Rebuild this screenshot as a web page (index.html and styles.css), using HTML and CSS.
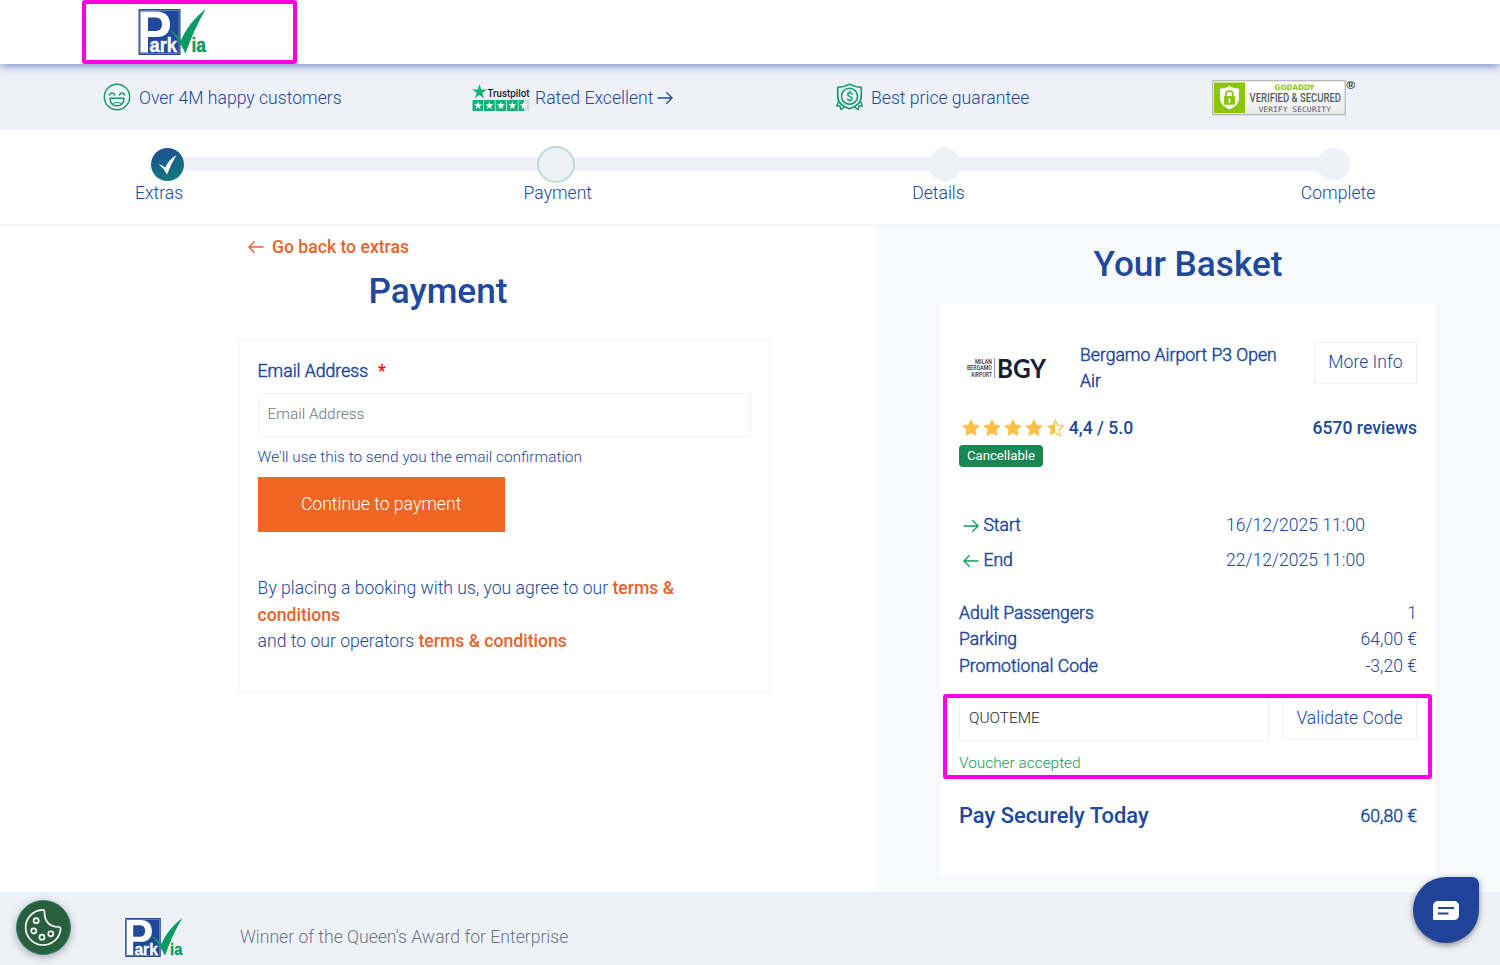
FILE: index.html
```html
<!DOCTYPE html>
<html lang="en">
<head>
<meta charset="utf-8">
<title>ParkVia - Payment</title>
<link rel="stylesheet" href="styles.css">
</head>
<body>
<svg class="defs" width="0" height="0">
  <symbol id="logo" viewBox="0 0 68 46">
    <rect x="0" y="0" width="42" height="46" fill="#20489b"/>
    <rect x="1.500" y="1.500" width="39" height="43" fill="none" stroke="#c9d3ea" stroke-width=".4"/>
    <path fill="#fff" fill-rule="evenodd" d="M2 2.500H18C27 2.500 31.500 7.500 31.500 15.500S27 28 18 28H9.500V43.500H2ZM9.500 8.500V22H17.500Q23.500 22 23.500 15.300T17.500 8.500Z"/>
    <text x="11" y="43.300" class="logo-text" fill="#fff" stroke="#fff" textLength="27.500" lengthAdjust="spacingAndGlyphs">ark</text>
    <path fill="#0a9b63" d="M30.500 20.500C35 23 39 26 42.500 31C49 17 57 8 67.500 0C59 14 53 28 47 44.500Q40 30 30.500 20.500Z"/>
    <text x="53" y="43.300" class="logo-text" fill="#0a9b63" stroke="#0a9b63" textLength="14.500" lengthAdjust="spacingAndGlyphs">ia</text>
  </symbol>
  <symbol id="right" viewBox="0 0 16 14">
    <path d="M.5 7H15M9.3 1.2L15.1 7L9.3 12.8" fill="none" stroke="currentColor" stroke-width="1.3"/>
  </symbol>
  <symbol id="left" viewBox="0 0 16 14">
    <path d="M15.5 7H1M6.7 1.2L.9 7L6.7 12.8" fill="none" stroke="currentColor" stroke-width="1.3"/>
  </symbol>
  <symbol id="star" viewBox="0 0 18 18">
    <path d="M9 .8L11.5 6L17.2 6.8L13.1 10.8L14.1 16.6L9 13.8L3.9 16.6L4.9 10.8L.8 6.8L6.5 6Z" fill="#ffc048" stroke="#ffc048" stroke-width=".8" stroke-linejoin="round"/>
  </symbol>
  <symbol id="tpstar" viewBox="0 0 10 10">
    <path d="M5 0L6.2 3.7H10L6.9 6L8.1 9.7L5 7.4L1.9 9.7L3.1 6L0 3.7H3.8Z" fill="currentColor"/>
  </symbol>
</svg>

<header class="header">
  <svg class="header-logo" width="69" height="46"><use href="#logo"/></svg>
  <div class="mark mark-logo"></div>
</header>

<section class="trust">
  <div class="trust-item">
    <svg class="smile" width="28" height="28" viewBox="0 0 28 28" fill="none" stroke="#149c66" stroke-width="1.4">
      <circle cx="14" cy="14" r="12.7"/>
      <path d="M6.3 12Q9 8 11.7 12M16.3 12Q19 8 21.7 12" stroke-linecap="round"/>
      <path d="M7 15.3H21Q21 22.8 14 22.8T7 15.3Z" stroke-linejoin="round"/>
      <path d="M9.8 20.8Q14 17.8 18.2 20.8" stroke-width="1.1"/>
    </svg>
    <span>Over 4M happy customers</span>
  </div>
  <div class="trust-item">
    <svg class="trustpilot" width="59" height="28" viewBox="0 0 59 28">
      <svg x="0" y="0" width="15" height="15" color="#12b378"><use href="#tpstar"/></svg>
      <text x="15.500" y="12.6" class="tp-text" textLength="42" lengthAdjust="spacingAndGlyphs">Trustpilot</text>
      <path fill="#12b378" d="M.5 16H11.3V27H.5ZM12 16H22.8V27H12ZM23.500 16H34.300V27H23.500ZM35 16H45.800V27H35ZM46.500 16H52V27H46.500Z"/>
      <path fill="#d5d8df" d="M52 16H57.2V27H52Z"/>
      <g color="#fff">
        <svg x="2" y="17.4" width="8" height="8"><use href="#tpstar"/></svg>
        <svg x="13.4" y="17.4" width="8" height="8"><use href="#tpstar"/></svg>
        <svg x="24.9" y="17.4" width="8" height="8"><use href="#tpstar"/></svg>
        <svg x="36.4" y="17.4" width="8" height="8"><use href="#tpstar"/></svg>
        <svg x="47.9" y="17.4" width="8" height="8"><use href="#tpstar"/></svg>
      </g>
    </svg>
    <span>Rated Excellent</span>
    <svg class="rated-arrow" width="16" height="14"><use href="#right"/></svg>
  </div>
  <div class="trust-item">
    <svg class="guarantee" width="27" height="28" viewBox="0 0 27 28" fill="none" stroke="#149c66" stroke-width="1.5" stroke-linejoin="round">
      <path d="M13.5 1.2Q18 4.2 24 4.3V13Q24.5 21.5 13.5 25.8Q2.5 21.5 3 13V4.3Q9 4.2 13.5 1.2Z" transform="translate(-1.6 0) scale(1.12 1)"/>
      <circle cx="13.5" cy="13.2" r="8"/>
      <path d="M2.4 18.5L.8 23L4 23L5 26.5L9 23.7M24.6 18.5L26.2 23L23 23L22 26.5L18 23.7"/>
      <text x="13.5" y="17.800" class="dollar" text-anchor="middle">$</text>
    </svg>
    <span>Best price guarantee</span>
  </div>
  <div class="trust-item">
    <svg class="seal" width="145" height="36" viewBox="0 0 145 36">
      <defs><linearGradient id="sealbg" x1="0" y1="0" x2="0" y2="1"><stop offset=".4" stop-color="#fff"/><stop offset="1" stop-color="#e8e8e8"/></linearGradient></defs>
      <rect x=".7" y=".7" width="132.5" height="34" fill="url(#sealbg)" stroke="#b4b7b9" stroke-width="1.3"/>
      <rect x="2" y="2.5" width="31" height="30.5" fill="#8cc60c"/>
      <path fill="#fff" d="M17.5 6Q22 8.8 27 8.8V19Q27 25 17.5 29.5Q8 25 8 19V8.8Q13 8.8 17.5 6Z"/>
      <rect x="12" y="16" width="11" height="8.7" rx="1" fill="#8cc60c"/>
      <path d="M14 17V14Q14 11 17.5 11T21 14V17" fill="none" stroke="#8cc60c" stroke-width="1.7"/>
      <path d="M17.5 18.5V22.5" stroke="#fff" stroke-width="1.8"/>
      <text x="62.500" y="9.900" class="seal-top" textLength="40" lengthAdjust="spacingAndGlyphs">GODADDY</text>
      <text x="37.5" y="22" class="seal-mid" textLength="91.500" lengthAdjust="spacingAndGlyphs">VERIFIED &amp; SECURED</text>
      <text x="46.500" y="32" class="seal-low" textLength="72.500" lengthAdjust="spacingAndGlyphs">VERIFY SECURITY</text>
      <text x="134.3" y="8.800" class="seal-reg" textLength="9" lengthAdjust="spacingAndGlyphs">®</text>
    </svg>
  </div>
</section>

<nav class="steps">
  <div class="step">
    <div class="track"><span class="dot done"><svg width="33" height="33" viewBox="0 0 33 33"><path fill="#fff" d="M7.5 16Q11.5 17 14.3 19.500Q17.5 12 25.500 7Q20 16 16 26.500Q12.5 20 7.5 16Z"/></svg></span><span class="line"></span></div>
    <span>Extras</span>
  </div>
  <div class="step">
    <div class="track current"><span class="dot"></span><span class="line"></span></div>
    <span>Payment</span>
  </div>
  <div class="step">
    <div class="track"><span class="dot"></span><span class="line"></span></div>
    <span>Details</span>
  </div>
  <div class="step">
    <div class="track"><span class="dot"></span></div>
    <span>Complete</span>
  </div>
</nav>

<main class="main">
  <section class="payment">
    <a class="back"><svg width="16" height="14"><use href="#left"/></svg><span>Go back to extras</span></a>
    <h1 class="title">Payment</h1>
    <form class="form">
      <label class="label"><span class="semi">Email Address</span><b class="req">*</b></label>
      <input class="input email" type="text" placeholder="Email Address">
      <p class="help">We'll use this to send you the email confirmation</p>
      <button class="continue" type="button">Continue to payment</button>
      <p class="terms">By placing a booking with us, you agree to our <b>terms &amp;<br>conditions</b><br>and to our operators <b>terms &amp; conditions</b></p>
    </form>
  </section>

  <aside class="side">
    <h1 class="title">Your Basket</h1>
    <div class="basket">
      <div class="product">
        <svg class="bgy" width="82" height="28" viewBox="0 0 82 28">
          <g class="bgy-small" text-anchor="end">
            <text x="26" y="9.8" textLength="17" lengthAdjust="spacingAndGlyphs">MILAN</text>
            <text x="26" y="16.2" textLength="25" lengthAdjust="spacingAndGlyphs">BERGAMO</text>
            <text x="26" y="22.6" textLength="21" lengthAdjust="spacingAndGlyphs">AIRPORT</text>
          </g>
          <path d="M28.5 4V24" stroke="#77808e" stroke-width=".8"/>
          <text x="31" y="23.500" class="bgy-big" textLength="49" lengthAdjust="spacingAndGlyphs">BGY</text>
        </svg>
        <p class="name semi">Bergamo Airport P3 Open<br>Air</p>
        <button class="ghost info" type="button">More Info</button>
      </div>
      <div class="rating">
        <span class="stars">
          <svg width="18" height="18"><use href="#star"/></svg><svg width="18" height="18"><use href="#star"/></svg><svg width="18" height="18"><use href="#star"/></svg><svg width="18" height="18"><use href="#star"/></svg><svg width="18" height="18" viewBox="0 0 18 18"><path d="M9 .8V13.8L3.9 16.6L4.9 10.8L.8 6.8L6.5 6Z" fill="#ffc048"/><path d="M9 .8L11.5 6L17.2 6.8L13.1 10.8L14.1 16.6L9 13.8" fill="none" stroke="#ffc048" stroke-width="1.2"/></svg>
        </span>
        <b>4,4 / 5.0</b>
        <b class="reviews">6570 reviews</b>
      </div>
      <span class="badge">Cancellable</span>
      <div class="dates">
        <div class="date"><svg width="16" height="14"><use href="#right"/></svg><span class="semi">Start</span><span class="when">16/12/2025 11:00</span></div>
        <div class="date"><svg width="16" height="14"><use href="#left"/></svg><span class="semi">End</span><span class="when">22/12/2025 11:00</span></div>
      </div>
      <div class="prices">
        <div class="price"><span class="semi">Adult Passengers</span><span>1</span></div>
        <div class="price"><span class="semi">Parking</span><span>64,00 €</span></div>
        <div class="price"><span class="semi">Promotional Code</span><span>-3,20 €</span></div>
      </div>
      <div class="voucher">
        <div class="voucher-row">
          <input class="input code" type="text" value="QUOTEME">
          <button class="ghost validate" type="button">Validate Code</button>
        </div>
        <p class="accepted">Voucher accepted</p>
        <div class="mark mark-voucher"></div>
      </div>
      <div class="total"><b>Pay Securely Today</b><span class="semi">60,80 €</span></div>
    </div>
  </aside>
</main>

<footer class="footer">
  <svg class="footer-logo" width="58" height="39"><use href="#logo"/></svg>
  <span class="award">Winner of the Queen's Award for Enterprise</span>
</footer>

<div class="cookie">
  <svg width="40" height="40" viewBox="0 0 40 40" fill="none" stroke="#fff" stroke-width="1.7" stroke-linejoin="round">
    <path d="M20 3Q22 2.500 22 5Q22 20 37 20.500Q39 21 38.500 23.500A18 18 0 1 1 20 3Z"/>
    <circle cx="13.500" cy="14" r="2.600"/><circle cx="11" cy="24.500" r="2.600"/><circle cx="19.500" cy="31" r="2.600"/><circle cx="28.500" cy="27.500" r="2.600"/>
  </svg>
</div>
<div class="chat">
  <svg width="26" height="20" viewBox="0 0 26 20"><path fill="#fff" d="M5.500 0H20.500Q26 0 26 5.500V13.500Q26 19 20.500 19H1Q0 19 0 18V5.500Q0 0 5.500 0Z"/><path d="M5 7H21M5 12.500H15.500" stroke="#20439a" stroke-width="2.200"/></svg>
</div>
</body>
</html>
```
FILE: styles.css
```css
* { box-sizing: border-box; }
body {
  margin: 0;
  height: 965px;
  overflow: hidden;
  background: #fff;
  color: #20489b;
  font: 300 17.6px/26.4px Roboto, "Liberation Sans", sans-serif;
}
p, h1 { margin: 0; }
b { font-weight: 500; }
svg { display: block; flex: none; overflow: visible; }
button, input { font: inherit; color: inherit; border-radius: 0; margin: 0; }
.defs { position: absolute; }
.semi { -webkit-text-stroke: .5px currentColor; }

.header {
  position: relative;
  z-index: 2;
  height: 64px;
  padding: 9px 0 0 138px;
  background: #fff;
  box-shadow: 0 2px 9px rgba(32, 72, 155, .6);
}
.logo-text { font: 700 19.5px "Liberation Sans", sans-serif; stroke-width: .4px; }
.mark { position: absolute; border: 4px solid #ff00e1; border-radius: 3px; }
.mark-logo { left: 82px; top: 0; width: 215px; height: 64px; }

.trust {
  height: 66px;
  padding: 1px 0 0 103px;
  display: grid;
  grid-template-columns: 369px 364px 376px auto;
  align-items: center;
  background: #eef1f8;
}
.trust-item { display: flex; align-items: center; }
.trust-item > span { padding-top: 1px; }
.smile { margin: -1px 8px 0 0; }
.trustpilot { margin-right: 4px; }
.rated-arrow { margin-left: 4px; }
.guarantee { margin: -1px 8px 0 0; }
.tp-text { font: 500 10px Roboto, sans-serif; fill: #1b1b1f; }
.dollar { font: 500 12.5px Roboto, sans-serif; fill: #149c66; stroke: none; }
.seal-top { font: 700 7.5px "DejaVu Sans", sans-serif; fill: #8cc60c; }
.seal-mid { font: 500 12px Roboto, sans-serif; fill: #545c66; }
.seal-low { font: 400 7.5px "DejaVu Sans Mono", monospace; fill: #59616f; }
.seal-reg { font: 700 11px "Liberation Sans", sans-serif; fill: #333; }

.steps {
  height: 96px;
  padding: 16px 0 0 135px;
  display: grid;
  grid-template-columns: 388.6px 388.6px 388.6px auto;
  border-bottom: 2px solid #f5f6fa;
}
.track { display: flex; align-items: center; height: 36px; margin: 0 -16px 0 16px; }
.track.current { margin-left: 13.4px; }
.step > span { display: block; margin-top: -2px; }
.dot { width: 33px; height: 33px; border-radius: 50%; background: #eef1f8; flex: none; }
.done { background: linear-gradient(160deg, #1d4f91 10%, #0e7c78 90%); }
.current .dot { width: 38px; height: 37px; border: 2px solid #b8e0d2; }
.line { flex: 1; height: 14px; background: #eef1f8; margin: 0 -2px; position: relative; z-index: -1; }

.main { display: flex; height: 664px; }
.payment { width: 876px; padding-top: 8px; }
.back { display: flex; align-items: center; gap: 8px; padding-left: 248px; color: #e8632b; font-weight: 500; }
.title { font-size: 35.2px; line-height: 44px; font-weight: 500; text-align: center; }
.payment .title { margin-top: 8.6px; }
.form { width: 531px; height: 353px; margin: 26px 0 0 238.6px; padding: 18px; border: 1px solid #f1f3f7; }
.label { display: flex; gap: 10px; height: 26px; }
.req { color: #f00; }
.input {
  display: block;
  background: #fff;
  border: 1px solid #edf0f5;
  padding: 0 9px 2px;
  font-size: 15.4px;
}
.email { width: 493px; height: 44px; margin-top: 9px; padding-bottom: 3px; }
.email::placeholder { color: #6c757d; opacity: 1; }
.help { font-size: 15.4px; line-height: 24px; margin-top: 8px; }
.continue { width: 247px; height: 55px; margin-top: 8.4px; padding: 0 0 1px; background: #ee6622; border: 0; color: #fff; display: block; }
.terms { margin-top: 43px; }
.terms b { color: #e8632b; }

.side { width: 624px; padding: 16px 65px 0; background: #f8f9fc; }
.basket { height: 570px; margin-top: 18px; padding: 38px 18px 0; background: #fff; }
.product { display: flex; height: 73px; }
.bgy { margin: 12px 0 0 7px; }
.bgy-small { font: 500 6.8px Roboto, sans-serif; fill: #313848; }
.bgy-big { font: 700 27px Lato, sans-serif; fill: #151d35; }
.name { width: 234px; margin-left: 32px; }
.ghost { background: #fff; border: 1px solid #edf0f5; padding: 0 0 1px; }
.info { width: 103px; height: 42px; }
.rating { display: flex; align-items: center; height: 26px; }
.stars { display: flex; gap: 3.1px; margin: 0 4.4px 0 3px; }
.reviews { margin-left: auto; }
.badge {
  display: block;
  width: 84px;
  height: 22px;
  margin-top: 4px;
  border-radius: 4px;
  background: #198754;
  color: #fff;
  font-size: 13.2px;
  font-weight: 400;
  line-height: 22px;
  text-align: center;
}
.dates { padding: 41px 0 0 4px; }
.date { display: flex; align-items: center; height: 35px; gap: 4.4px; }
.date svg { color: #0f9c62; }
.date .when { margin-left: auto; margin-right: 52px; }
.prices { margin-top: 22px; }
.price { display: flex; justify-content: space-between; }
.voucher { position: relative; margin-top: 17.6px; }
.voucher-row { display: flex; justify-content: space-between; }
.code { width: 310px; height: 44px; color: #212529; }
.validate { width: 135px; height: 43px; }
.accepted { margin-top: 9px; font-size: 15.4px; color: #0f9c62; }
.mark-voucher { left: -16px; top: -3px; width: 489px; height: 85px; }
.total { display: flex; justify-content: space-between; align-items: center; margin-top: 27px; }
.total b { font-size: 21.9px; }

.footer { height: 74px; margin-top: 2px; padding: 1px 0 0 125px; display: flex; background: #eef1f8; }
.footer-logo { margin-top: 25px; }
.award { margin: 31px 0 0 57px; color: #6c757d; }

.cookie {
  position: absolute;
  left: 16px;
  top: 900px;
  width: 55px;
  height: 55px;
  padding: 6px 6px;
  border-radius: 50%;
  border: 1px solid #34837a;
  background: #285f3c;
  box-shadow: 0 2px 8px rgba(0, 0, 0, .3);
}
.cookie svg { width: 39px; height: 39px; }
.chat {
  position: absolute;
  left: 1413px;
  top: 877px;
  width: 66px;
  height: 66px;
  padding: 24px 20px;
  border-radius: 33px 7px 33px 33px;
  background: #20439a;
  box-shadow: 0 2px 6px rgba(0, 0, 0, .45);
}
```
